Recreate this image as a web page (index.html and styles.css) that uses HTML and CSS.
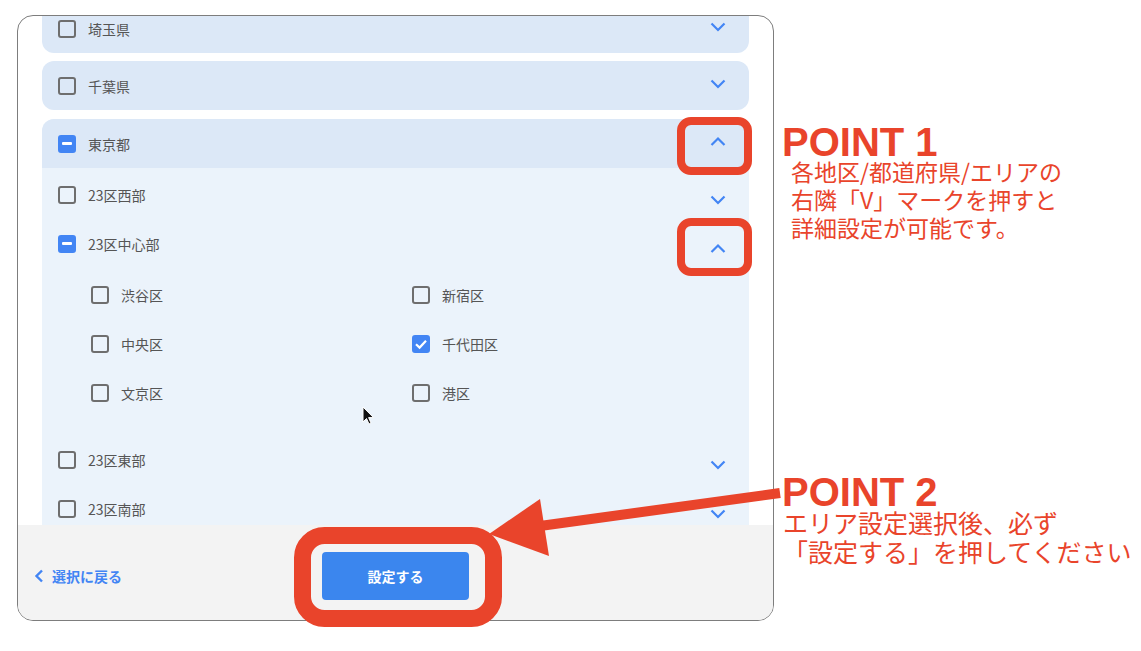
FILE: index.html
```html
<!DOCTYPE html>
<html lang="ja">
<head>
  <meta charset="UTF-8">
  <title>エリア設定</title>
  <link rel="stylesheet" href="styles.css">
</head>
<body>
  <div class="frame">
    <div class="scroll">
      <div class="list">
        <div class="pref">
          <div class="row">
            <span class="cb"></span><span>埼玉県</span>
            <svg class="chev" viewBox="0 0 24 24"><path d="M5.5 8.5 L12 15 L18.5 8.5"/></svg>
          </div>
        </div>
        <div class="pref">
          <div class="row">
            <span class="cb"></span><span>千葉県</span>
            <svg class="chev" viewBox="0 0 24 24"><path d="M5.5 8.5 L12 15 L18.5 8.5"/></svg>
          </div>
        </div>
        <div class="pref open">
          <div class="row head">
            <span class="cb mixed"><i></i></span><span>東京都</span>
            <svg class="chev" viewBox="0 0 24 24"><path d="M5.5 15 L12 8.5 L18.5 15"/></svg>
          </div>
          <div class="areas">
            <div class="row sub">
              <span class="cb"></span><span>23区西部</span>
              <svg class="chev" viewBox="0 0 24 24"><path d="M5.5 8.5 L12 15 L18.5 8.5"/></svg>
            </div>
            <div class="row sub">
              <span class="cb mixed"><i></i></span><span>23区中心部</span>
              <svg class="chev" viewBox="0 0 24 24"><path d="M5.5 15 L12 8.5 L18.5 15"/></svg>
            </div>
            <div class="wards">
              <label class="ward"><span class="cb"></span><span>渋谷区</span></label>
              <label class="ward"><span class="cb"></span><span>新宿区</span></label>
              <label class="ward"><span class="cb"></span><span>中央区</span></label>
              <label class="ward"><span class="cb on"><svg viewBox="0 0 18 18"><path d="M4 9.2 L7.6 12.6 L14 5.8"/></svg></span><span>千代田区</span></label>
              <label class="ward"><span class="cb"></span><span>文京区</span></label>
              <label class="ward"><span class="cb"></span><span>港区</span></label>
            </div>
            <div class="row sub">
              <span class="cb"></span><span>23区東部</span>
              <svg class="chev" viewBox="0 0 24 24"><path d="M5.5 8.5 L12 15 L18.5 8.5"/></svg>
            </div>
            <div class="row sub">
              <span class="cb"></span><span>23区南部</span>
              <svg class="chev" viewBox="0 0 24 24"><path d="M5.5 8.5 L12 15 L18.5 8.5"/></svg>
            </div>
          </div>
        </div>
      </div>
    </div>
    <div class="footer">
      <a class="back" href="#">
        <svg viewBox="0 0 10 14"><path d="M8 1.5 L2.5 7 L8 12.5"/></svg>
        選択に戻る
      </a>
      <button class="submit">設定する</button>
      <span></span>
    </div>
  </div>

  <!-- annotation layer -->
  <svg class="marks" viewBox="0 0 1141 651">
    <path class="cursor" d="M363 407 L363 422 L366.5 418.5 L369 424 L371 423 L368.6 417.6 L373.5 417.6 Z"/>
    <rect x="681" y="121" width="67" height="50" rx="10"/>
    <rect x="681" y="222" width="67" height="50" rx="10"/>
    <rect class="thick" x="302.5" y="535.5" width="191" height="83" rx="22"/>
    <line x1="780" y1="493" x2="540" y2="526"/>
    <polygon points="540,499 549,556 489,534"/>
  </svg>

  <div class="note note1">
    <div class="note-title">POINT 1</div>
    <div class="note-body">各地区/都道府県/エリアの<br>右隣「V」マークを押すと<br>詳細設定が可能です。</div>
  </div>
  <div class="note note2">
    <div class="note-title">POINT 2</div>
    <div class="note-body">エリア設定選択後、必ず<br>「設定する」を押してください</div>
  </div>
</body>
</html>
```

FILE: styles.css
```css
* {
  margin: 0;
  padding: 0;
  box-sizing: border-box;
}
body {
  font-family: "Noto Sans CJK JP", "Noto Sans", sans-serif;
  background: #fff;
  padding: 15px 0 0 17px;
  width: 1141px;
  height: 651px;
  overflow: hidden;
  position: relative;
}
.frame {
  width: 757px;
  height: 606px;
  border: 1px solid #7d7d7d;
  border-radius: 16px;
  overflow: hidden;
  background: #fff;
  display: flex;
  flex-direction: column;
}
.scroll {
  flex: 1;
  overflow: hidden;
}
.list {
  margin-top: -12px;
  padding: 0 24px;
  display: flex;
  flex-direction: column;
  gap: 8px;
}
.pref {
  background: #dce8f7;
  border-radius: 12px;
}
.pref.open {
  background: #ebf3fb;
  border-radius: 12px 12px 0 0;
  margin-top: 1px;
}
.pref.open .head {
  background: #dce8f7;
  border-radius: 12px 12px 0 0;
}
.row {
  height: 49px;
  display: flex;
  align-items: center;
  gap: 12px;
  padding: 0 19px 0 16px;
  font-size: 14px;
  color: #555;
}
.chev {
  width: 24px;
  height: 24px;
  margin-left: auto;
  margin-top: -4px;
}
.chev path {
  fill: none;
  stroke: #4285f4;
  stroke-width: 2.2;
}
.areas {
  padding-top: 2px;
}
.sub .chev {
  margin-top: 10px;
}
.cb {
  width: 18px;
  height: 18px;
  border: 2px solid #6e6e6e;
  border-radius: 3px;
  flex-shrink: 0;
  display: flex;
  align-items: center;
  justify-content: center;
}
.cb.mixed, .cb.on {
  background: #4285f4;
  border-color: #4285f4;
}
.cb.mixed i {
  width: 10px;
  height: 2.5px;
  background: #fff;
  border-radius: 1px;
}
.cb.on svg {
  width: 18px;
  height: 18px;
  flex-shrink: 0;
}
.cb.on path {
  fill: none;
  stroke: #fff;
  stroke-width: 2.2;
}
.wards {
  display: grid;
  grid-template-columns: 321px 321px;
  padding: 2px 0 18px 49px;
}
.ward {
  height: 49px;
  display: flex;
  align-items: center;
  gap: 12px;
  font-size: 14px;
  color: #555;
}
.footer {
  background: #f3f3f3;
  display: grid;
  grid-template-columns: 1fr auto 1fr;
  align-items: center;
  padding: 27px 16px 20px;
}
.back {
  display: flex;
  align-items: center;
  gap: 8px;
  color: #4285f4;
  font-size: 14px;
  font-weight: bold;
  text-decoration: none;
}
.back svg {
  width: 10px;
  height: 14px;
}
.back path {
  fill: none;
  stroke: #4285f4;
  stroke-width: 2.4;
}
.submit {
  width: 147px;
  height: 48px;
  border: none;
  border-radius: 4px;
  background: #3b86ee;
  color: #fff;
  font-family: "Noto Sans CJK JP", sans-serif;
  font-size: 14px;
  font-weight: bold;
}
.marks {
  position: absolute;
  left: 0;
  top: 0;
  width: 1141px;
  height: 651px;
  pointer-events: none;
}
.marks rect {
  fill: none;
  stroke: #e9442b;
  stroke-width: 8;
}
.marks rect.thick {
  stroke-width: 17;
}
.marks line {
  stroke: #e9442b;
  stroke-width: 10;
}
.marks polygon {
  fill: #e9442b;
}
.marks .cursor {
  fill: #111;
  stroke: #fff;
  stroke-width: 1;
}
.note {
  position: absolute;
  color: #e9442b;
  white-space: nowrap;
}
.note-title {
  font-family: "Liberation Sans", Arial, sans-serif;
  font-weight: bold;
  font-size: 40px;
  line-height: 35px;
}
.note1 {
  left: 782px;
  top: 125px;
}
.note1 .note-body {
  font-size: 23px;
  line-height: 28px;
  margin: -3px 0 0 9px;
}
.note2 {
  left: 782px;
  top: 475px;
}
.note2 .note-body {
  font-size: 25px;
  line-height: 29px;
  margin: -2px 0 0 1px;
}
```
